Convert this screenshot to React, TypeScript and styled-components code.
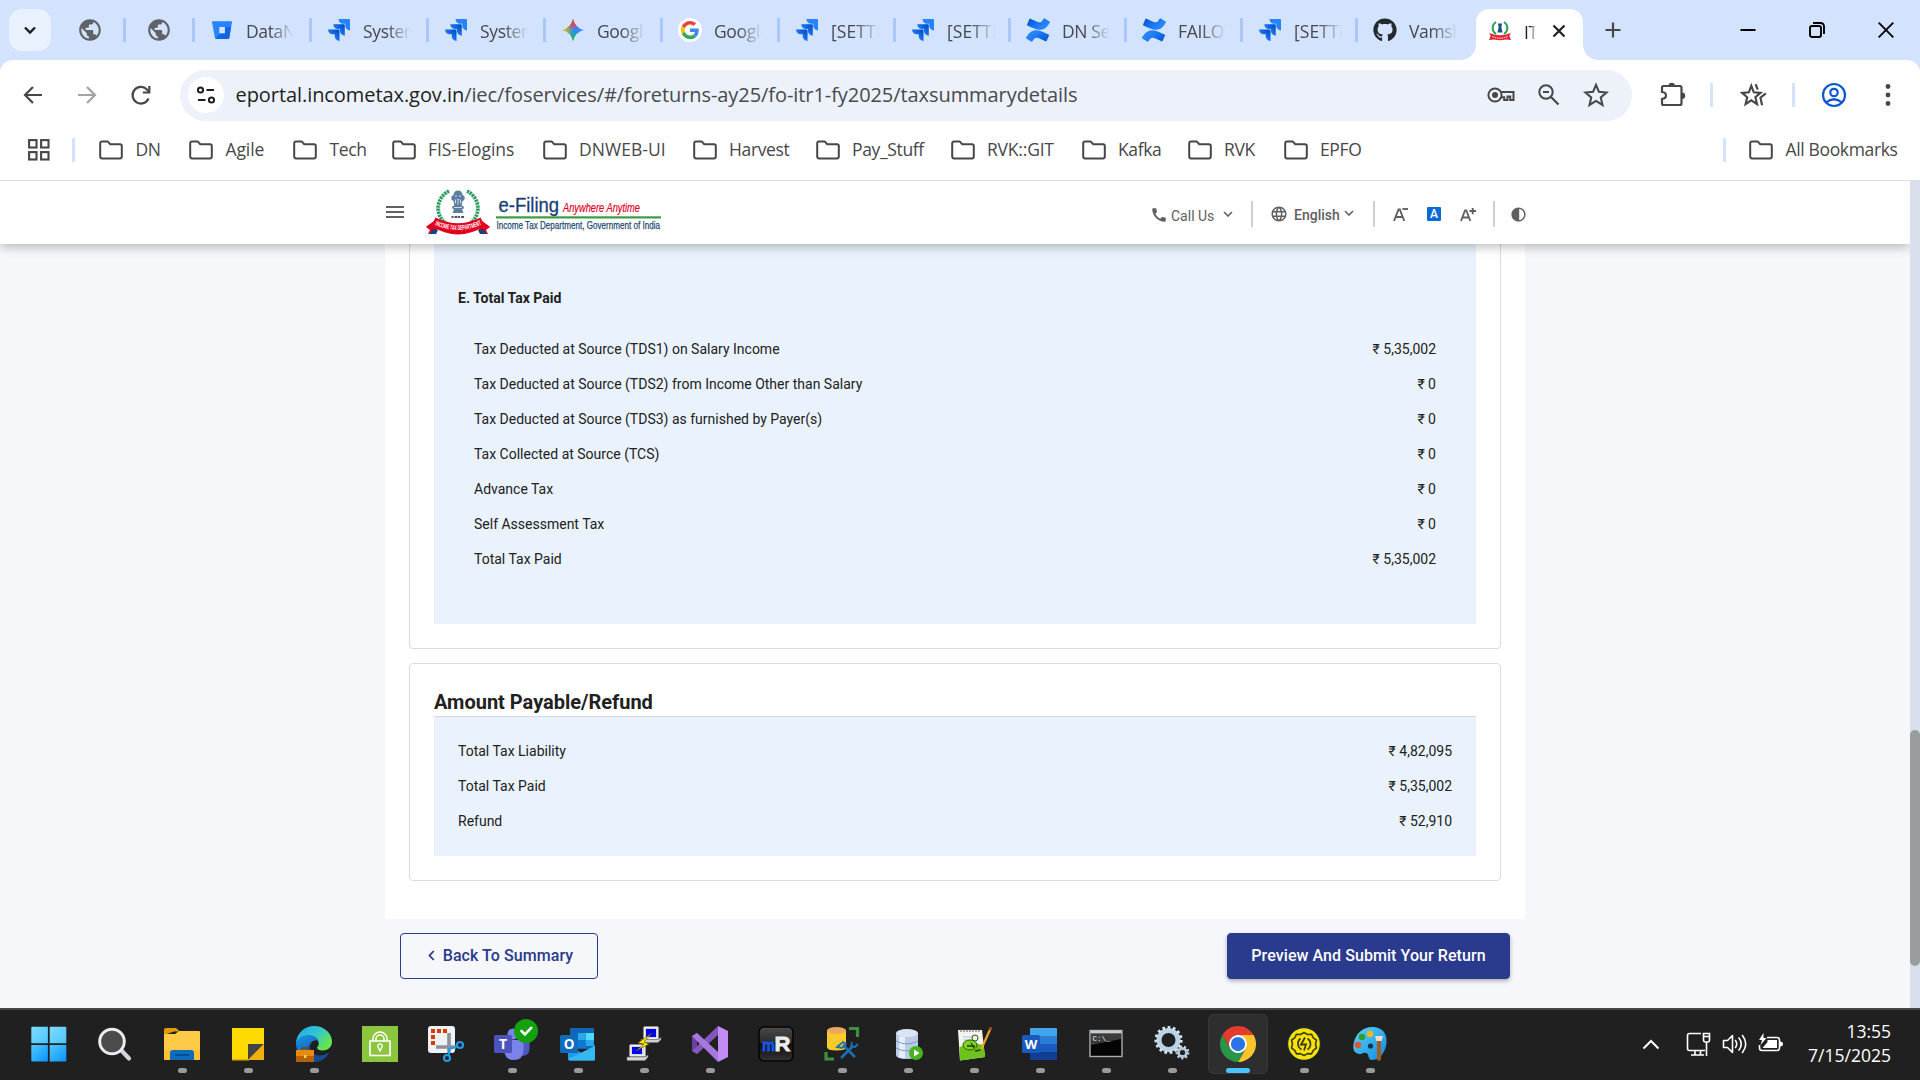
import React from "react";
import styled, { createGlobalStyle, css } from "styled-components";
import { MdPublic, MdCall, MdLanguage, MdContrast } from "react-icons/md";
import { FaGithub } from "react-icons/fa";

const uiFont = `"Open Sans", "Noto Sans", sans-serif`;

const GlobalStyle = createGlobalStyle`
  * { box-sizing: border-box; }
  body { margin: 0; overflow: hidden; background: #f5f7fb; font-family: Roboto, sans-serif; }
  svg { display: block; flex: none; }
`;

const Screen = styled.div`
  width: 1920px;
  height: 1080px;
  display: flex;
  flex-direction: column;
  overflow: hidden;
`;

/* ---------- browser chrome ---------- */

const TabStrip = styled.div`
  height: 60px;
  flex: none;
  background: #d3e2fd;
  display: flex;
  align-items: center;
  padding-left: 9px;
`;

const TabSearch = styled.div`
  width: 42px;
  height: 42px;
  border-radius: 13px;
  background: #e9f0fe;
  display: flex;
  align-items: center;
  justify-content: center;
  margin-right: 12px;
`;

const Tab = styled.div<{ $w: number; $pad: number; $last?: boolean }>`
  width: ${(p) => p.$w}px;
  height: 24px;
  padding-left: ${(p) => p.$pad}px;
  flex: none;
  display: flex;
  align-items: center;
  gap: 13px;
  border-right: ${(p) => (p.$last ? 0 : 3)}px solid #a8c7fa;
`;

const TabTitle = styled.div<{ $ls?: number }>`
  width: 48px;
  overflow: hidden;
  white-space: nowrap;
  font: 400 17.5px/28px ${uiFont};
  letter-spacing: ${(p) => p.$ls ?? -0.35}px;
  color: #46494d;
  padding-top: 2px;
  mask-image: linear-gradient(90deg, #000 50%, transparent 100%);
`;

const ActiveTab = styled.div`
  width: 107px;
  height: 51px;
  flex: none;
  align-self: flex-end;
  background: #fff;
  border-radius: 13px 13px 0 0;
  display: flex;
  align-items: center;
  padding: 0 0 7px 12px;
  position: relative;
  &::before,
  &::after {
    content: "";
    position: absolute;
    bottom: 0;
    width: 15px;
    height: 15px;
  }
  &::before {
    left: -15px;
    background: radial-gradient(circle at 0 0, transparent 14.5px, #fff 15px);
  }
  &::after {
    right: -15px;
    background: radial-gradient(circle at 100% 0, transparent 14.5px, #fff 15px);
  }
`;

const ActiveTitle = styled(TabTitle)`
  width: 12px;
  color: #1f1f1f;
  margin: 0 16px 0 12px;
`;

const NewTab = styled.div`
  margin-left: 22px;
  width: 16px;
`;

const WindowButtons = styled.div`
  margin-left: auto;
  margin-right: 26px;
  display: flex;
  align-items: center;
  gap: 53px;
`;

const ToolbarWrap = styled.div`
  flex: none;
  height: 121px;
  background: linear-gradient(#d3e2fd 20px, #fff 20px);
  border-bottom: 1px solid #dcdde0;
`;

const Toolbar = styled.div`
  background: #fff;
  border-radius: 13px 13px 0 0;
  height: 120px;
`;

const AddressRow = styled.div`
  height: 69px;
  display: flex;
  align-items: center;
  padding: 1px 0 0 21px;
`;

const NavIcons = styled.div`
  display: flex;
  align-items: center;
  gap: 30px;
  width: 159px;
`;

const Omnibox = styled.div`
  width: 1452px;
  height: 51px;
  border-radius: 26px;
  background: #ecf1fa;
  display: flex;
  align-items: center;
  padding: 0 23px 0 8px;
`;

const SiteChip = styled.div`
  width: 36px;
  height: 36px;
  border-radius: 50%;
  background: #fff;
  display: flex;
  align-items: center;
  justify-content: center;
  margin-right: 11.5px;
`;

const Url = styled.div`
  flex: 1;
  font: 400 20px/30px ${uiFont};
  letter-spacing: -0.07px;
  color: #474a4e;
  white-space: nowrap;
  padding-bottom: 1px;
  b {
    font-weight: 400;
    color: #1f1f1f;
  }
`;

const OmniActions = styled.div`
  display: flex;
  align-items: center;
  gap: 22px;
`;

const ThinRule = styled.i<{ $ml?: number; $mr?: number }>`
  display: block;
  width: 3px;
  height: 24px;
  border-radius: 1px;
  background: #d3e2fd;
  margin-left: ${(p) => p.$ml ?? 0}px;
  margin-right: ${(p) => p.$mr ?? 0}px;
`;

const RightTools = styled.div`
  display: flex;
  align-items: center;
  padding-left: 28px;
`;

const BookmarkRow = styled.div`
  height: 42px;
  display: flex;
  align-items: center;
  padding-left: 28px;
`;

const Bookmark = styled.div<{ $w?: number; $ls?: number }>`
  width: ${(p) => (p.$w ? `${p.$w}px` : "auto")};
  flex: none;
  display: flex;
  align-items: center;
  gap: 12.5px;
  font: 400 17.5px/26px ${uiFont};
  letter-spacing: ${(p) => p.$ls ?? -0.35}px;
  color: #474747;
  white-space: nowrap;
`;

const BookmarkName = styled.span`
  padding-bottom: 2px;
`;

const AllBookmarks = styled.div`
  margin-left: auto;
  width: 197px;
  display: flex;
  align-items: center;
  gap: 23px;
`;

/* ---------- web page ---------- */

const SiteHeader = styled.header`
  height: 63px;
  flex: none;
  width: 1910px;
  background: #fff;
  box-shadow: 0 3px 10px rgba(0, 0, 0, 0.26);
  clip-path: inset(0 0 -20px 0);
  z-index: 2;
  display: flex;
  padding: 0 385px 0 386px;
  justify-content: space-between;
`;

const Brand = styled.div`
  display: flex;
  align-items: flex-start;
  padding-top: 8px;
  gap: 22px;
`;

const Burger = styled.div`
  width: 18px;
  height: 12px;
  margin-top: 17px;
  border-top: 2px solid #616161;
  border-bottom: 2px solid #616161;
  display: flex;
  align-items: center;
  &::before {
    content: "";
    width: 18px;
    height: 2px;
    background: #616161;
  }
`;

const Utility = styled.div`
  display: flex;
  align-items: center;
  height: 26px;
  margin-top: 20px;
  color: #5f6062;
  font: 400 14px/20px Roboto, sans-serif;
`;

const UtilGroup = styled.div<{ $w: number; $pad: number; $gap?: number }>`
  width: ${(p) => p.$w}px;
  height: 26px;
  padding-left: ${(p) => p.$pad}px;
  display: flex;
  align-items: center;
  gap: ${(p) => p.$gap ?? 6}px;
  border-right: ${(p) => (p.$w > 40 ? 2 : 0)}px solid #cfcfcf;
`;

const UtilLabel = styled.span<{ $strong?: boolean; $w: number }>`
  width: ${(p) => p.$w}px;
  font-weight: ${(p) => (p.$strong ? 500 : 400)};
  padding-top: ${(p) => (p.$strong ? 1 : 3)}px;
  white-space: nowrap;
`;

const Lift = styled.div<{ $y: number }>`
  padding-bottom: ${(p) => p.$y}px;
`;

const SizeDefault = styled.span`
  width: 14px;
  height: 14px;
  border-radius: 1px;
  background: #0a6bd6;
  color: #fff;
  font: 500 12px/14px Roboto, sans-serif;
  text-align: center;
`;

const Viewport = styled.div`
  height: 827px;
  display: flex;
`;

const PageColumn = styled.div`
  width: 1910px;
  display: flex;
  flex-direction: column;
`;

const Body = styled.main`
  flex: 1;
  background: #f5f7fb;
`;

const Sheet = styled.div`
  width: 1140px;
  height: 675px;
  margin-left: 385px;
  padding: 0 24px;
  background: #fff;
`;

const cardBase = css`
  border: 1px solid #d9dbea;
  padding: 0 24px;
`;

const UpperCard = styled.section`
  ${cardBase}
  border-top: 0;
  border-radius: 0 0 4px 4px;
  height: 405px;
`;

const LowerCard = styled.section`
  ${cardBase}
  border-radius: 4px;
  height: 218px;
  margin-top: 14px;
`;

const Panel = styled.div<{ $h: number; $top: number; $inset: number; $rule?: boolean }>`
  background: #eaf3fd;
  height: ${(p) => p.$h}px;
  padding: ${(p) => p.$top}px ${(p) => p.$inset}px 0;
  border-top: ${(p) => (p.$rule ? "1px solid #d3d8ec" : "0")};
`;

const GroupTitle = styled.h4`
  margin: 0 0 23px -16px;
  font: 700 14px/20px Roboto, sans-serif;
  color: #212121;
  height: 20px;
`;

const CardTitle = styled.h3`
  margin: 0;
  padding-top: 24px;
  height: 52px;
  font: 700 20px/28px Roboto, sans-serif;
  letter-spacing: -0.01px;
  color: #212121;
`;

const Row = styled.div`
  height: 35px;
  display: flex;
  justify-content: space-between;
  align-items: center;
  font: 400 14px/20px Roboto, sans-serif;
  color: #212121;
`;

const Actions = styled.div`
  display: flex;
  justify-content: space-between;
  width: 1110px;
  margin: 14px 0 0 400px;
`;

const Button = styled.button<{ $solid?: boolean }>`
  height: 46px;
  width: ${(p) => (p.$solid ? 283 : 198)}px;
  border-radius: 4px;
  border: 1px solid #2a3a8c;
  background: ${(p) => (p.$solid ? "#2a3a8c" : "transparent")};
  color: ${(p) => (p.$solid ? "#fff" : "#2a3a8c")};
  font: 500 16px/24px Roboto, sans-serif;
  letter-spacing: 0.07px;
  display: flex;
  align-items: center;
  justify-content: center;
  gap: 8px;
  padding: 0 0 1px ${(p) => (p.$solid ? 0 : 3)}px;
  box-shadow: ${(p) => (p.$solid ? "0 2px 4px rgba(0,0,0,0.3)" : "none")};
  white-space: nowrap;
`;

const ScrollTrack = styled.div`
  width: 10px;
  background: #dadfee;
  padding-top: 549px;
`;

const ScrollThumb = styled.div`
  height: 236px;
  border-radius: 5px;
  background: #9b9c9e;
`;

/* ---------- taskbar ---------- */

const Taskbar = styled.footer`
  height: 72px;
  flex: none;
  border-top: 2px solid #454646;
  background: #202020;
  display: flex;
  padding: 0 29px 0 17px;
`;

const Slot = styled.div<{ $active?: boolean }>`
  width: 60px;
  height: 60px;
  margin: 4px 3px 0;
  flex: none;
  border-radius: 6px;
  display: flex;
  flex-direction: column;
  align-items: center;
  padding-top: 12px;
  gap: 6px;
  ${(p) =>
    p.$active &&
    css`
      background: #2e2e2e;
      box-shadow: inset 0 0 0 1px #383838;
    `}
`;

const Dot = styled.i<{ $active?: boolean }>`
  width: ${(p) => (p.$active ? 24 : 9)}px;
  height: 5px;
  border-radius: 3px;
  background: ${(p) => (p.$active ? "#4cc2ff" : "#9a9a9a")};
`;

const Tray = styled.div`
  margin-left: auto;
  display: flex;
  align-items: center;
  height: 68px;
`;

const Clock = styled.div`
  width: 108px;
  text-align: right;
  color: #fff;
  font: 400 17.5px/24.5px ${uiFont};
  letter-spacing: 0;
  padding-bottom: 2px;
`;

/* ---------- small icons ---------- */

const S = ({ w = 24, h, vb, children, ...r }: any) => (
  <svg width={w} height={h ?? w} viewBox={vb ?? `0 0 ${w} ${h ?? w}`} fill="none" {...r}>
    {children}
  </svg>
);

const Jira = () => (
  <S w={22} vb="0 0 24 24">
    <defs>
      <linearGradient id="jg" x1="1" y1="0" x2="0.3" y2="0.7">
        <stop offset="0.2" stopColor="#0052cc" />
        <stop offset="1" stopColor="#2684ff" />
      </linearGradient>
    </defs>
    <path fill="url(#jg)" d="M11.571 11.513H0a5.218 5.218 0 0 0 5.232 5.215h2.13v2.057A5.215 5.215 0 0 0 12.575 24V12.518a1.005 1.005 0 0 0-1.005-1.005z" />
    <path fill="url(#jg)" d="M17.294 5.757H5.736a5.215 5.215 0 0 0 5.215 5.214h2.129v2.058a5.218 5.218 0 0 0 5.215 5.214V6.758a1.001 1.001 0 0 0-1.001-1.001z" />
    <path fill="#2684ff" d="M23.013 0H11.455a5.215 5.215 0 0 0 5.215 5.215h2.129v2.057A5.215 5.215 0 0 0 24 12.483V1.005A1.001 1.001 0 0 0 23.013 0Z" />
  </S>
);

const Confluence = () => (
  <S w={24} vb="0 0 24 24" style={{ margin: "0 -1px" }}>
    <defs>
      <linearGradient id="cg" x1="0" y1="0" x2="1" y2="0.6">
        <stop offset="0" stopColor="#0052cc" />
        <stop offset="0.8" stopColor="#2684ff" />
      </linearGradient>
      <linearGradient id="cg2" x1="1" y1="1" x2="0" y2="0.4">
        <stop offset="0" stopColor="#0052cc" />
        <stop offset="0.8" stopColor="#2684ff" />
      </linearGradient>
    </defs>
    <path fill="url(#cg2)" d="M.87 18.257c-.248.382-.53.875-.763 1.245a.764.764 0 0 0 .255 1.04l4.965 3.054a.764.764 0 0 0 1.058-.26c.199-.332.454-.763.733-1.221 1.967-3.247 3.945-2.853 7.508-1.146l4.957 2.337a.764.764 0 0 0 1.028-.382l2.364-5.346a.764.764 0 0 0-.382-1 599.851 599.851 0 0 1-4.965-2.361C10.911 10.97 5.224 11.185.87 18.257z" />
    <path fill="url(#cg)" d="M23.131 5.743c.249-.405.531-.875.764-1.25a.764.764 0 0 0-.256-1.034L18.675.404a.764.764 0 0 0-1.058.26c-.195.335-.451.763-.734 1.225-1.966 3.246-3.945 2.85-7.508 1.146L4.437.694a.764.764 0 0 0-1.027.382L1.046 6.422a.764.764 0 0 0 .382 1c1.039.49 3.105 1.467 4.965 2.361 6.698 3.246 12.392 3.029 16.738-4.04z" />
  </S>
);

const Bitbucket = () => (
  <S w={22}>
    <path d="M1.6 2.2h18.8q.8 0 .6.9l-2.700 15.900q-.15.9-1 .9H5q-.9 0-1-.9L1 3.100q-.1-.9.6-.9z" fill="#2684ff" />
    <path d="M20 8h-6.200l-1 6.300H9.200l-4.300 5.200q.4.400.9.400h11.500q.8 0 .9-.8z" fill="#1265e0" />
    <rect x="8.300" y="8" width="5.600" height="6.300" fill="#d3e2fd" />
  </S>
);

const Gemini = () => (
  <S w={22}>
    <defs>
      <linearGradient id="gm" x1="0" y1="0.5" x2="1" y2="0.5">
        <stop offset="0.05" stopColor="#fbbc04" />
        <stop offset="0.38" stopColor="#6f9a9a" />
        <stop offset="0.55" stopColor="#3186ff" />
        <stop offset="1" stopColor="#3f8cff" />
      </linearGradient>
      <linearGradient id="gm2" x1="0.5" y1="0" x2="0.5" y2="1">
        <stop offset="0" stopColor="#ea4335" />
        <stop offset="0.25" stopColor="#ea4335" stopOpacity="0.9" />
        <stop offset="0.46" stopColor="#ea4335" stopOpacity="0" />
        <stop offset="0.58" stopColor="#0ebc5f" stopOpacity="0" />
        <stop offset="0.85" stopColor="#0ebc5f" />
      </linearGradient>
    </defs>
    {["url(#gm)", "url(#gm2)"].map((f) => (
      <path key={f} fill={f} d="M11 0Q13 9 22 11Q13 13 11 22Q9 13 0 11Q9 9 11 0z" />
    ))}
  </S>
);

const GoogleG = () => (
  <S w={24} vb="0 0 24 24" style={{ margin: "0 -1px" }}>
    <circle cx="12" cy="12" r="12" fill="#fff" />
    <g transform="translate(2.900 2.900) scale(.38)">
      <path fill="#EA4335" d="M24 9.500c3.540 0 6.710 1.220 9.210 3.600l6.850-6.850C35.900 2.380 30.470 0 24 0 14.620 0 6.510 5.380 2.560 13.220l7.980 6.190C12.430 13.720 17.740 9.500 24 9.500z" />
      <path fill="#4285F4" d="M46.980 24.550c0-1.570-.15-3.090-.38-4.550H24v9.020h12.940c-.58 2.960-2.260 5.480-4.780 7.180l7.730 6c4.510-4.180 7.090-10.360 7.090-17.650z" />
      <path fill="#FBBC05" d="M10.530 28.590c-.48-1.450-.76-2.990-.76-4.590s.27-3.140.76-4.590l-7.980-6.190C.92 16.460 0 20.120 0 24c0 3.880.92 7.540 2.560 10.780l7.970-6.190z" />
      <path fill="#34A853" d="M24 48c6.480 0 11.930-2.130 15.890-5.810l-7.730-6c-2.150 1.450-4.920 2.300-8.160 2.300-6.260 0-11.570-4.220-13.470-9.910l-7.980 6.190C6.510 42.620 14.620 48 24 48z" />
    </g>
  </S>
);

const TaxFavicon = () => (
  <S w={24}>
    <path d="M8 3C3.500 6 3.500 12 8 15M16 3c4.500 3 4.500 9 0 12" stroke="#2fa05a" strokeWidth="2" />
    <path d="M10 4.500h4l-.6 4 1.100 5h-5l1.100-5z" fill="#1d4f88" />
    <path d="M1.500 14Q12 18.500 22.500 14l-1 3 1.500 4-5-.5Q12 22 6 20.500L1 21 2.500 17z" fill="#e32636" />
    <path d="M4.500 17.700q7.500 3 15 0" stroke="#fff" strokeWidth="1" strokeDasharray="1.500 .8" />
  </S>
);

const Folder = () => (
  <S w={24} h={20}>
    <path d="M1.200 16.600V3.200Q1.200 1.400 3 1.400h5.600L11.300 4.200H21q1.800 0 1.800 1.800v10.600q0 1.800-1.800 1.800H3q-1.800 0-1.800-1.800z" stroke="#474747" strokeWidth="2" strokeLinejoin="round" />
  </S>
);

const starPath = "M12 2.600l2.700 6.500 7 .6-5.300 4.600 1.600 6.900-6-3.700-6 3.700 1.600-6.900L2.300 9.700l7-.6z";

/* ---------- brand logo ---------- */

const BrandLogo = () => (
  <S w={236} h={48}>
    <defs>
      <path id="ribbonArc" d="M9 36Q32 46 55 36" />
    </defs>
    <g transform="translate(32 20.500)">
      <path d="M-9 -18.500A20.500 19.500 0 0 0 -9 16M9 -18.500A20.500 19.500 0 0 1 9 16" stroke="#259b5d" strokeWidth="3.600" strokeDasharray="2.300 .8" />
      <path d="M-8 -17A18.500 17.500 0 0 0 -8 14M8 -17A18.500 17.500 0 0 1 8 14" stroke="#7cc49c" strokeWidth="1" strokeDasharray="1 2" />
    </g>
    <g fill="#5c7d9f">
      <circle cx="32" cy="6" r="4.500" />
      <circle cx="28.300" cy="9" r="3" />
      <circle cx="35.700" cy="9" r="3" />
      <path d="M27.500 11h9l-.8 6h-7.400z" />
      <ellipse cx="32" cy="18.500" rx="6" ry="2.300" />
      <path d="M28 20h8l1.300 4h-10.600z" />
    </g>
    <path d="M29 7h2M33 7h2M29.500 10.500v4M32 10.500v5M34.500 10.500v4M28 18.500h8" stroke="#d9e4ee" strokeWidth=".9" />
    <path d="M25.500 28h13" stroke="#555" strokeWidth="2" strokeDasharray="2 1 3 .6" />
    <path d="M1 37l7-5 4 6-2 6-8 1 2-4-4-3zM63 37l-7-5-4 6 2 6 8 1-2-4 4-3z" fill="#e3001f" />
    <path d="M3 45l4-5 5 1-2 4zM61 45l-4-5-5 1 2 4z" fill="#1d3f7d" />
    <path d="M9.500 28.500Q32 40 54.500 28.500l4 8.500Q32 54 5.500 37z" fill="#e3001f" />
    <text fontFamily="Liberation Sans, Arial, sans-serif" fontWeight="700" fontSize="6.800" fill="#fff">
      <textPath href="#ribbonArc" startOffset="0" textLength="48" lengthAdjust="spacingAndGlyphs">
        INCOME TAX DEPARTMENT
      </textPath>
    </text>
    <g fontFamily="Liberation Sans, Arial, sans-serif">
      <text x="72.500" y="22.500" fontSize="20" fill="#163f77" stroke="#163f77" strokeWidth=".3" textLength="60.500" lengthAdjust="spacingAndGlyphs">e-Filing</text>
      <text x="137" y="23" fontSize="12.500" fontStyle="italic" fill="#e3001f" stroke="#e3001f" strokeWidth=".2" textLength="77" lengthAdjust="spacingAndGlyphs">Anywhere Anytime</text>
      <text x="70.500" y="39.800" fontSize="11.200" fill="#1b4a72" stroke="#1b4a72" strokeWidth=".25" textLength="163.500" lengthAdjust="spacingAndGlyphs">Income Tax Department, Government of India</text>
    </g>
    <rect x="70" y="27.300" width="165" height="2.200" fill="#3d9b41" />
  </S>
);

/* ---------- taskbar icons (36 x 36) ---------- */

const icons36: Record<string, React.ReactNode> = {
  start: (
    <g transform="translate(-1.300 -.3)">
      <defs>
        <linearGradient id="w1" x1="0" y1="0" x2="1" y2="1">
          <stop offset="0" stopColor="#7fdcff" />
          <stop offset="1" stopColor="#4cc4fb" />
        </linearGradient>
        <linearGradient id="w2" x1="0" y1="0" x2="1" y2="1">
          <stop offset="0" stopColor="#50c8ff" />
          <stop offset="1" stopColor="#0a93fb" />
        </linearGradient>
      </defs>
      <path d="M1.600 1h15.600v16.600H.6V2q0-1 1-1z" fill="url(#w1)" />
      <path d="M19 1h15.600q1 0 1 1v15.600H19z" fill="url(#w1)" />
      <path d="M.6 19.200H17.200v16.600H1.600q-1 0-1-1z" fill="url(#w2)" />
      <path d="M19 19.200h16.600v15.600q0 1-1 1H19z" fill="url(#w2)" />
    </g>
  ),
  search: (
    <>
      <path d="M23.500 24.500l7.500 8" stroke="#d4d5dc" strokeWidth="4.200" strokeLinecap="round" />
      <circle cx="14" cy="15.500" r="12.300" fill="#4b4b4b" stroke="#ececf0" strokeWidth="3" />
    </>
  ),
  explorer: (
    <>
      <path d="M0 4q0-2 2-2h10l4 3.500h-6L0 9z" fill="#e09d07" />
      <path d="M0 9q0-1 1-1h10l4-3h20q1 0 1 1v27q0 1-1 1H1q-1 0-1-1z" fill="#fdcb48" />
      <path d="M0 24h36v9q0 1-1 1H1q-1 0-1-1z" fill="#f8bb2c" opacity=".6" />
      <path d="M6 34v-7q0-3 3-3h18q3 0 3 3v7z" fill="#0e6cbd" />
      <path d="M11 29h14" stroke="#0a3f78" strokeWidth="1.300" />
    </>
  ),
  notes: (
    <>
      <path d="M2 2h32v17L18 34H2z" fill="#fddb00" />
      <path d="M2 33h17v1.500H2z" fill="#e6a800" />
      <path d="M18 18h16L18 34z" fill="#444" />
      <path d="M34 18v16H18z" fill="#f2ae0c" />
    </>
  ),
  edge: (
    <>
      <defs>
        <linearGradient id="e1" x1="0" y1="0" x2="1" y2=".6">
          <stop offset="0" stopColor="#22a7e8" />
          <stop offset=".55" stopColor="#33c6d2" />
          <stop offset="1" stopColor="#67e646" />
        </linearGradient>
        <linearGradient id="e2" x1="0" y1="0" x2=".6" y2="1">
          <stop offset="0" stopColor="#1d93e3" />
          <stop offset="1" stopColor="#0a53a5" />
        </linearGradient>
      </defs>
      <path d="M0 18C0 8 8 0 18 0c11 0 18 8 18 15.500 0 6-4.500 9-9.500 9-3.500 0-5.500-1.200-5.500-2.700 0-1 1.700-1.500 1.700-4.300 0-4-4-7.500-9.700-7.500C6 10 1 14 0 18z" fill="url(#e1)" />
      <path d="M0 17.500C1 13 6 9 12.500 9c5 0 9 2.500 10 6-1.500-1-3.500-1-5.500 0-4 2-4 9 0 13 4 3.500 10 3 15-1-3 6-9 9-14 9C8 36 0 28 0 17.500z" fill="url(#e2)" />
      <path d="M14 18c-1 6 3 11.500 10 11.500 3.500 0 7-1.500 9.500-3.500C30 33 24 36 18 36 12 33 10 22 14 18z" fill="#134b96" />
      <path d="M6 24v-2h6v2" stroke="#7a4308" strokeWidth="1.500" />
      <rect x="0" y="24" width="18" height="12" fill="#b4610a" />
      <rect x="0" y="24" width="18" height="6" fill="#e68a12" />
      <rect x="8" y="29" width="2.400" height="3" fill="#ffd84a" />
    </>
  ),
  lock: (
    <>
      <rect width="36" height="36" fill="#8cc63e" />
      <path d="M8 15h20v14.500H8z" stroke="#fff" strokeWidth="1.600" />
      <path d="M11 15v-2a7 7 0 0 1 14 0v2M14 15v-2a4 4 0 0 1 8 0v2" stroke="#fff" strokeWidth="1.500" />
      <path d="M18 25l-2-4a2.200 2.200 0 1 1 4 0z" stroke="#fff" strokeWidth="1.400" />
    </>
  ),
  snip: (
    <>
      <rect x="0" y="0" width="27" height="27" rx="3" fill="#eef1f5" />
      <path d="M3 5h17M5 3v17" stroke="#d83b01" strokeWidth="4" strokeDasharray="4 2" />
      <path d="M21 7v20M8 21h20" stroke="#8b929b" strokeWidth="3.600" />
      <circle cx="19" cy="32" r="3" stroke="#1f9be8" strokeWidth="2.200" />
      <circle cx="32" cy="19" r="3" stroke="#1f9be8" strokeWidth="2.200" />
      <path d="M21 29v-6l8-2.500" stroke="#1f9be8" strokeWidth="2" />
    </>
  ),
  teams: (
    <>
      <circle cx="19" cy="8" r="5.500" fill="#7b83eb" />
      <path d="M25 14h9.500q1 0 1 1v8q0 7-8 7z" fill="#4f57c4" />
      <path d="M11 14h17q1.500 0 1.500 1.500V24q0 10-10 10-7 0-9-7z" fill="#7b83eb" />
      <rect x="0" y="9" width="18" height="18" rx="1.500" fill="#4b53bc" />
      <text x="9" y="23" fontSize="14" fontWeight="700" fill="#fff" textAnchor="middle" fontFamily="Open Sans, sans-serif">T</text>
      <circle cx="32" cy="5" r="12" fill="#13a10e" />
      <path d="M27.500 5l3.400 3.400 6.300-6.600" stroke="#fff" strokeWidth="2.600" strokeLinecap="round" />
    </>
  ),
  outlook: (
    <>
      <path d="M10 3q0-1 1-1h22q1 0 1 1v20H10z" fill="#1066b5" />
      <path d="M18 7h8v7h-8z" fill="#28a8ea" />
      <path d="M26 7h8v7h-8z" fill="#50d9ff" />
      <path d="M10 14h16v8H10z" fill="#0f78d4" />
      <path d="M26 14h8v6h-8z" fill="#28a8ea" />
      <path d="M8 20l14 7 13-8v14q0 1.500-1.500 1.500h-24Q8 34.500 8 33z" fill="#1f9de2" />
      <path d="M8 33l27-13v13q0 1.500-1.500 1.500h-24z" fill="#35b8f1" />
      <rect x="0" y="9" width="18" height="18" rx="1.500" fill="#0f6cbd" />
      <text x="9" y="23" fontSize="13.500" fontWeight="700" fill="#fff" textAnchor="middle" fontFamily="Open Sans, sans-serif">O</text>
    </>
  ),
  putty: (
    <>
      <path d="M18 1h14v12H18z" fill="#d8d8d8" stroke="#fff" />
      <path d="M20 3h10v8H20z" fill="#0000f0" />
      <path d="M15 13.500h17l3-2v2l-3 3H15z" fill="#d0d0d0" stroke="#777" strokeWidth=".6" />
      <path d="M4 19h15v11H4z" fill="#d8d8d8" stroke="#fff" />
      <path d="M6 21h10v7H6z" fill="#0000f0" />
      <path d="M1 31h18l3-2v2l-3 3.500H1z" fill="#d8d8d8" stroke="#777" strokeWidth=".6" />
      <path d="M26 7L12 17l6 1-8 7 13-7-5-2z" fill="#ffee00" stroke="#5a5200" strokeWidth=".7" />
    </>
  ),
  vs: (
    <>
      <path d="M0 10l5-3 6 5.500v9.500L5 28l-5-3z" fill="#6a3fa0" />
      <path d="M5 13l5.500 5L5 23z" fill="#202020" />
      <path d="M0 25l5 3 21-19V0z" fill="#8457bd" />
      <path d="M0 10l5-3 21 19v10z" fill="#a678de" />
      <path d="M26 0l10 5v26l-10 5z" fill="#c28cf5" />
    </>
  ),
  mr: (
    <>
      <defs>
        <linearGradient id="mrg" x1="0" y1="0" x2="0" y2="1">
          <stop offset="0" stopColor="#4a4a4a" />
          <stop offset=".45" stopColor="#2c2c2c" />
          <stop offset=".5" stopColor="#0e0e0e" />
          <stop offset="1" stopColor="#333" />
        </linearGradient>
      </defs>
      <rect x="1" y="1" width="34" height="34" rx="5" fill="url(#mrg)" stroke="#050505" strokeWidth="1.500" />
      <text x="4" y="25" fontSize="17" fontWeight="700" fill="#1557e8" stroke="#1557e8" strokeWidth=".8" fontFamily="Liberation Sans, sans-serif" textLength="13" lengthAdjust="spacingAndGlyphs">m</text>
      <text x="16.500" y="25" fontSize="21" fontWeight="700" fill="#ececec" stroke="#ececec" strokeWidth=".8" fontFamily="Liberation Sans, sans-serif" textLength="16" lengthAdjust="spacingAndGlyphs">R</text>
    </>
  ),
  ssms: (
    <>
      <path d="M3 4v17q0 3.500 9.500 3.500T22 21V4z" fill="#f7cb2b" />
      <ellipse cx="12.500" cy="4.500" rx="9.500" ry="3.600" fill="#eda75e" />
      <path d="M25 2.500h8.500V11M2 26v7h8" stroke="#3f8f3d" strokeWidth="3.200" />
      <path d="M17 32l12-12M19 19l12 12" stroke="#1a6fb5" strokeWidth="2.600" />
      <path d="M13 21l6-5 3 2-4 4zM28 16l-1 4 4 1 3-3" stroke="#1a6fb5" strokeWidth="1.800" />
    </>
  ),
  sqldev: (
    <>
      <path d="M6 7v22q0 4 11 4t11-4V7z" fill="#b9cbe6" />
      <path d="M9 10v21q3 1.500 6 1.600V11z" fill="#e6eefa" />
      <ellipse cx="17" cy="7" rx="11" ry="4" fill="#d9e5f5" />
      <path d="M6 15q11 6 22 0M6 22q11 6 22 0" stroke="#8299bd" />
      <circle cx="26" cy="27" r="7" fill="#46b41f" />
      <path d="M24 23.500v7l5.500-3.500z" fill="#fff" />
    </>
  ),
  npp: (
    <>
      <path d="M2 4h24l3 27-25 3.500z" fill="#f2f5ee" />
      <path d="M3.500 21q12-6 24-2l1.500 12-25 3.500z" fill="#6cc31c" />
      <path d="M4.500 4.500h20" stroke="#555" strokeWidth="3" strokeDasharray="1 2" />
      <path d="M7 11h9M7 14h7M9 17h5" stroke="#a9c5d6" />
      <ellipse cx="14" cy="19" rx="7" ry="5" fill="#7dd421" stroke="#2c5e0b" />
      <circle cx="19" cy="12" r="3" fill="#e9fadb" stroke="#384d28" />
      <path d="M11 20h8M15 17l3 5M19 25l6-1" stroke="#203d0b" strokeWidth="1.300" />
      <path d="M34 1l2 1-9 20-2.500 3 .5-4z" fill="#f1a824" />
      <path d="M34 1l2 1-1 2.500-2-1z" fill="#b1331c" />
    </>
  ),
  word: (
    <>
      <path d="M8 3q0-1 1-1h25q1 0 1 1v7H8z" fill="#41a5ee" />
      <path d="M8 10h27v8H8z" fill="#2b7cd3" />
      <path d="M8 18h27v8H8z" fill="#185abd" />
      <path d="M8 26h27v7q0 1-1 1H9q-1 0-1-1z" fill="#103f91" />
      <rect x="0" y="9" width="18" height="18" rx="1.500" fill="#185abd" />
      <text x="9" y="23" fontSize="13" fontWeight="700" fill="#fff" textAnchor="middle" fontFamily="Open Sans, sans-serif">W</text>
    </>
  ),
  cmd: (
    <>
      <rect x="2" y="4.500" width="32" height="26" fill="#050505" stroke="#a9adb3" strokeWidth="1.400" />
      <rect x="2.500" y="4.500" width="31" height="3" fill="#c9cdd2" />
      <path d="M3 8h30v5L3 19z" fill="#3b3b3b" />
      <text x="4.500" y="14.500" fontSize="7.500" fill="#eee" fontFamily="Liberation Mono, monospace">C:\_</text>
    </>
  ),
  gears: (
    <>
      <circle cx="14.500" cy="14" r="9.500" stroke="#b9d3e6" strokeWidth="5" />
      <circle cx="14.500" cy="14" r="12.600" stroke="#d4e4ef" strokeWidth="3" strokeDasharray="2.700 2.580" />
      <circle cx="28.500" cy="26.500" r="4" stroke="#b4cadf" strokeWidth="2.800" />
      <circle cx="28.500" cy="26.500" r="5.900" stroke="#c9daea" strokeWidth="2" strokeDasharray="2 2.100" />
    </>
  ),
  chrome: (
    <g transform="scale(.75)">
      <circle cx="24" cy="24" r="12.500" fill="#fff" />
      <path d="M24 12H44.780A24 24 0 0 0 3.220 12L13.610 30A12 12 0 0 1 24 12z" fill="#e33b2e" />
      <path d="M44.780 12H24A12 12 0 0 1 34.390 30L24 48A24 24 0 0 0 44.780 12z" fill="#fcc42c" />
      <path d="M24 48L34.390 30A12 12 0 0 1 13.610 30L3.220 12A24 24 0 0 0 24 48z" fill="#2a9447" />
      <circle cx="24" cy="24" r="9.500" fill="#2b73e8" />
    </g>
  ),
  bolt: (
    <>
      <circle cx="18" cy="18" r="16.400" fill="#fbe10a" stroke="#0e2c38" strokeWidth="1.200" />
      <path d="M18 6.500l3.500 2 4-.3 1.800 3.600 3.200 2.400-1 3.800 1 4-3.200 2.300-1.800 3.600-4-.3L18 29.500l-3.500-1.900-4 .3-1.800-3.600-3.200-2.300 1-4-1-3.800 3.200-2.400 1.800-3.600 4 .3z" stroke="#3b3d14" strokeWidth="1.600" strokeLinejoin="round" />
      <path d="M14.500 12.500a6.500 6.500 0 0 0 1 11M21.500 23.500a6.500 6.500 0 0 0 0-11" stroke="#3b3d14" strokeWidth="1.600" />
      <path d="M19 11.500l-4 7h5l-2 6" stroke="#3b3d14" strokeWidth="1.800" />
    </>
  ),
  paint: (
    <>
      <defs>
        <linearGradient id="pp" x1="0" y1="0" x2="1" y2="1">
          <stop offset="0" stopColor="#5ad4fa" />
          <stop offset="1" stopColor="#0f8ae0" />
        </linearGradient>
      </defs>
      <path d="M22 1C33 2 36 11 34 20c-2 8-7 14-14 14-5 0-2-6-6-7-3-.8-3 1-6 1-6 0-8-5-6-12C4 7 12 0 22 1z" fill="url(#pp)" />
      <circle cx="10" cy="11" r="3.200" fill="#2f9e2b" />
      <circle cx="18" cy="8" r="3.200" fill="#f7b61a" />
      <circle cx="6" cy="19" r="3.200" fill="#e2552b" />
      <circle cx="18.500" cy="20" r="2.600" fill="#163349" />
      <path d="M25 15h4v19q-2 1.500-4 0z" fill="#a45b1d" />
      <path d="M23 10h8l-1.500 5h-5z" fill="#f0ddc8" />
    </>
  ),
};

const apps: [string, 0 | 1 | 2][] = [
  ["start", 0], ["search", 0], ["explorer", 1], ["notes", 1], ["edge", 1], ["lock", 0], ["snip", 0],
  ["teams", 1], ["outlook", 1], ["putty", 1], ["vs", 1], ["mr", 0], ["ssms", 1], ["sqldev", 1],
  ["npp", 1], ["word", 1], ["cmd", 1], ["gears", 1], ["chrome", 2], ["bolt", 1], ["paint", 1],
];

/* ---------- data ---------- */

const tabs: { icon: React.ReactNode; title?: string; w: number; pad?: number; ls?: number }[] = [
  { icon: <MdPublic size={26} color="#5f6368" style={{ margin: "0 -2px" }} />, w: 63 },
  { icon: <MdPublic size={26} color="#5f6368" style={{ margin: "0 -2px" }} />, w: 69, pad: 22 },
  { icon: <Bitbucket />, title: "DataN", w: 117 },
  { icon: <Jira />, title: "System", w: 117 },
  { icon: <Jira />, title: "System", w: 117 },
  { icon: <Gemini />, title: "Google", w: 117 },
  { icon: <GoogleG />, title: "Google", w: 117 },
  { icon: <Jira />, title: "[SETTI", w: 116, ls: 0.1 },
  { icon: <Jira />, title: "[SETTI", w: 115, ls: 0.1 },
  { icon: <Confluence />, title: "DN Set", w: 116 },
  { icon: <Confluence />, title: "FAILOV", w: 116 },
  { icon: <Jira />, title: "[SETTI", w: 115, ls: 0.1 },
  { icon: <FaGithub size={24} color="#24292f" style={{ margin: "0 -1px" }} />, title: "Vamsh", w: 118 },
];

const bookmarks: [string, number, number?][] = [
  ["DN", 90], ["Agile", 104, -0.1], ["Tech", 98.5], ["FIS-Elogins", 151, -0.05], ["DNWEB-UI", 150, 0.05],
  ["Harvest", 123], ["Pay_Stuff", 135], ["RVK::GIT", 131, -0.2], ["Kafka", 106], ["RVK", 96], ["EPFO", 90],
];

const taxPaid = [
  ["Tax Deducted at Source (TDS1) on Salary Income", "₹ 5,35,002"],
  ["Tax Deducted at Source (TDS2) from Income Other than Salary", "₹ 0"],
  ["Tax Deducted at Source (TDS3) as furnished by Payer(s)", "₹ 0"],
  ["Tax Collected at Source (TCS)", "₹ 0"],
  ["Advance Tax", "₹ 0"],
  ["Self Assessment Tax", "₹ 0"],
  ["Total Tax Paid", "₹ 5,35,002"],
];

const refund = [
  ["Total Tax Liability", "₹ 4,82,095"],
  ["Total Tax Paid", "₹ 5,35,002"],
  ["Refund", "₹ 52,910"],
];

const Chevron = () => (
  <S w={10} h={6}>
    <path d="M1 1l4 4 4-4" stroke="#5f6062" strokeWidth="1.600" />
  </S>
);

export default function App() {
  return (
    <Screen>
      <GlobalStyle />
      <TabStrip>
        <TabSearch>
          <S w={14} h={9}><path d="M2 1.500l5 5 5-5" stroke="#1f1f1f" strokeWidth="2.400" /></S>
        </TabSearch>
        {tabs.map((t, i) => (
          <Tab key={i} $w={t.w} $pad={t.pad ?? 16} $last={i === tabs.length - 1}>
            {t.icon}
            {t.title && <TabTitle $ls={t.ls}>{t.title}</TabTitle>}
          </Tab>
        ))}
        <ActiveTab>
          <TaxFavicon />
          <ActiveTitle>IT</ActiveTitle>
          <S w={14}><path d="M1.500 1.500l11 11M12.500 1.500l-11 11" stroke="#1f1f1f" strokeWidth="2.200" /></S>
        </ActiveTab>
        <NewTab>
          <S w={16}><path d="M8 .5v15M.5 8h15" stroke="#474747" strokeWidth="2.200" /></S>
        </NewTab>
        <WindowButtons>
          <S w={16} h={16}><path d="M.5 8h15" stroke="#000" strokeWidth="2" /></S>
          <S w={16} h={16}>
            <rect x="1" y="4" width="11" height="11" rx="2" stroke="#000" strokeWidth="1.900" />
            <path d="M4 1h7.500Q15 1 15 4.500V12" stroke="#000" strokeWidth="1.900" />
          </S>
          <S w={16} h={16}><path d="M.7.700l14.600 14.600M15.300.700L.7 15.300" stroke="#000" strokeWidth="1.900" /></S>
        </WindowButtons>
      </TabStrip>

      <ToolbarWrap>
        <Toolbar>
          <AddressRow>
            <NavIcons>
              <S w={24}><path d="M21 12H4.500M12 4l-8 8 8 8" stroke="#474747" strokeWidth="2.200" /></S>
              <S w={24}><path d="M3 12h16.500M12 4l8 8-8 8" stroke="#a3a3a3" strokeWidth="2.200" /></S>
              <S w={24}>
                <path d="M19.500 15.500a8.300 8.300 0 1 1-1.600-9l2.300 2.500" stroke="#474747" strokeWidth="2.200" />
                <path d="M20.300 3v6.500h-6.500" stroke="#474747" strokeWidth="2.200" />
              </S>
            </NavIcons>
            <Omnibox>
              <SiteChip>
                <S w={20} h={18}>
                  <circle cx="4.500" cy="4" r="2.600" stroke="#1f1f1f" strokeWidth="2" />
                  <path d="M10.500 4H18M2 14h7.500" stroke="#1f1f1f" strokeWidth="2.200" />
                  <circle cx="15.500" cy="14" r="2.600" stroke="#1f1f1f" strokeWidth="2" />
                </S>
              </SiteChip>
              <Url>
                <b>eportal.incometax.gov.in</b>/iec/foservices/#/foreturns-ay25/fo-itr1-fy2025/taxsummarydetails
              </Url>
              <OmniActions>
                <S w={28} h={24}>
                  <circle cx="8" cy="12" r="6.600" stroke="#474747" strokeWidth="2" />
                  <circle cx="8" cy="12" r="3" fill="#474747" />
                  <path d="M14 9h12.500v8h-3.300v-3.500h-2.700V17h-3.300v-2.700H14.500" stroke="#474747" strokeWidth="2" />
                </S>
                <S w={24}>
                  <circle cx="9" cy="9" r="6.700" stroke="#474747" strokeWidth="2" />
                  <path d="M14 14l7.500 7.500M6 9h6" stroke="#474747" strokeWidth="2.200" />
                </S>
                <S w={26} vb="0 0 24 24"><path d={starPath} stroke="#474747" strokeWidth="1.900" /></S>
              </OmniActions>
            </Omnibox>
            <RightTools>
              <S w={28}>
                <path d="M3 6h17q1.500 0 1.500 1.500v16q0 1.500-1.500 1.500H3.500Q2 25 2 23.500V19q4-.5 4-3.500t-4-3.500V7.500Q2 6 3.500 6" transform="translate(0 -1)" stroke="#474747" strokeWidth="2.200" />
                <path d="M8.500 5a3.200 3.200 0 0 1 6.400 0zM22 11.500a3.200 3.200 0 0 1 0 6.400z" fill="#474747" />
              </S>
              <ThinRule $ml={22} $mr={27} />
              <S w={28} vb="0 0 26 26">
                <path d="M10.500 4.500l2.300 6 6.300.5-4.800 4.100 1.500 6.300-5.300-3.400-5.300 3.400 1.500-6.300L2 11l6.200-.5z" stroke="#474747" strokeWidth="2" />
                <path d="M14.500 3l2 5M24 11.500l-5 4 1.500 7" stroke="#474747" strokeWidth="2" />
              </S>
              <ThinRule $ml={23.5} $mr={26} />
              <S w={26}>
                <circle cx="13" cy="13" r="11" stroke="#0b57d0" strokeWidth="2.200" />
                <circle cx="13" cy="10.500" r="3.700" stroke="#0b57d0" strokeWidth="2.200" />
                <path d="M5 20.500q8-6.500 16 0" stroke="#0b57d0" strokeWidth="2.200" />
              </S>
              <S w={6} h={24} style={{ marginLeft: 38 }}>
                {[3.5, 12, 20.5].map((y) => <circle key={y} cx="3" cy={y} r="2.400" fill="#474747" />)}
              </S>
            </RightTools>
          </AddressRow>
          <BookmarkRow>
            <S w={22}>
              {[[1, 1], [13, 1], [1, 13], [13, 13]].map(([x, y]) => (
                <rect key={`${x}-${y}`} x={x + 0.1} y={y + 0.1} width="7.400" height="7.400" stroke="#474747" strokeWidth="2.100" />
              ))}
            </S>
            <ThinRule $ml={22} $mr={24} />
            {bookmarks.map(([name, w, ls]) => (
              <Bookmark key={name} $w={w} $ls={ls}><Folder /><BookmarkName>{name}</BookmarkName></Bookmark>
            ))}
            <AllBookmarks>
              <ThinRule />
              <Bookmark><Folder /><BookmarkName>All Bookmarks</BookmarkName></Bookmark>
            </AllBookmarks>
          </BookmarkRow>
        </Toolbar>
      </ToolbarWrap>

      <Viewport>
        <PageColumn>
          <SiteHeader>
            <Brand>
              <Burger />
              <BrandLogo />
            </Brand>
            <Utility>
              <UtilGroup $w={102} $pad={0} $gap={3}>
                <MdCall size={18} style={{ margin: "2px 0 0 -1px" }} />
                <UtilLabel $w={49}>Call Us</UtilLabel>
                <Chevron />
              </UtilGroup>
              <UtilGroup $w={122} $pad={17}>
                <MdLanguage size={18} />
                <UtilLabel $w={44} $strong>English</UtilLabel>
                <Lift $y={3}><Chevron /></Lift>
              </UtilGroup>
              <UtilGroup $w={120} $pad={18} $gap={19}>
                <S w={15} h={15}>
                  <path d="M1 14L5.500 2.500h1.300L11.300 14M2.800 10h6.800" stroke="#5f6062" strokeWidth="1.900" />
                  <path d="M9.500 2H15" stroke="#5f6062" strokeWidth="1.900" />
                </S>
                <SizeDefault>A</SizeDefault>
                <S w={16} h={15}>
                  <path d="M1 14L5 3.500h1.300L10.300 14M2.800 10.500h5.800" stroke="#5f6062" strokeWidth="1.800" />
                  <path d="M9.500 4H16M12.700 1v6.200" stroke="#5f6062" strokeWidth="1.900" />
                </S>
              </UtilGroup>
              <UtilGroup $w={30} $pad={15}>
                <MdContrast size={17} />
              </UtilGroup>
            </Utility>
          </SiteHeader>

          <Body>
            <Sheet>
              <UpperCard>
                <Panel $h={380} $top={44} $inset={40}>
                  <GroupTitle>E. Total Tax Paid</GroupTitle>
                  {taxPaid.map(([k, v]) => (
                    <Row key={k}><span>{k}</span><span>{v}</span></Row>
                  ))}
                </Panel>
              </UpperCard>
              <LowerCard>
                <CardTitle>Amount Payable/Refund</CardTitle>
                <Panel $h={140} $top={16} $inset={24} $rule>
                  {refund.map(([k, v]) => (
                    <Row key={k}><span>{k}</span><span>{v}</span></Row>
                  ))}
                </Panel>
              </LowerCard>
            </Sheet>
            <Actions>
              <Button>
                <S w={7} h={11}><path d="M5.800 1L1.500 5.500l4.300 4.500" stroke="#2a3a8c" strokeWidth="1.800" /></S>
                Back To Summary
              </Button>
              <Button $solid>Preview And Submit Your Return</Button>
            </Actions>
          </Body>
        </PageColumn>
        <ScrollTrack><ScrollThumb /></ScrollTrack>
      </Viewport>

      <Taskbar>
        {apps.map(([name, state]) => (
          <Slot key={name} $active={state === 2}>
            <S w={36} overflow="visible">{icons36[name]}</S>
            {state > 0 && <Dot $active={state === 2} />}
          </Slot>
        ))}
        <Tray>
          <S w={18} h={11} style={{ marginRight: 26 }}><path d="M1.500 9.500L9 2l7.500 7.500" stroke="#fff" strokeWidth="2" /></S>
          <S w={25} h={26} style={{ marginRight: 11 }}>
            <path d="M15 2.500H3.500q-2 0-2 2v13q0 2 2 2H19M5 24h13M9 20v4M14.500 20v4" stroke="#fff" strokeWidth="1.600" />
            <path d="M17.500 2.500h6v6.500q0 2-2 2h-2q-2 0-2-2zM17.500 5.500h6M20.500 11v14" stroke="#fff" strokeWidth="1.600" />
          </S>
          <S w={26} h={22} style={{ marginRight: 10 }}>
            <path d="M1.500 7.500h4l5-5v17l-5-5h-4z" stroke="#fff" strokeWidth="1.600" strokeLinejoin="round" />
            <path d="M13.500 7.500q2.500 3.500 0 7M17 5q4.500 6 0 12M20.500 2.500q6.500 8.500 0 17" stroke="#fff" strokeWidth="1.600" strokeLinecap="round" />
          </S>
          <S w={25} h={22}>
            <path d="M9 4.500h10q2.500 0 2.500 2.500v8q0 2.500-2.500 2.500H4q-2.500 0-2.500-2.500v-3" stroke="#fff" strokeWidth="1.600" />
            <path d="M9.500 7H19v8H4.500l5-6zM22 8.500q3 0 3 2.500t-3 2.500z" fill="#fff" />
            <path d="M5.500 0L1 7h3l-1.500 5L8.500 5H5.500z" fill="#fff" />
          </S>
          <Clock>
            13:55
            <br />
            7/15/2025
          </Clock>
        </Tray>
      </Taskbar>
    </Screen>
  );
}
